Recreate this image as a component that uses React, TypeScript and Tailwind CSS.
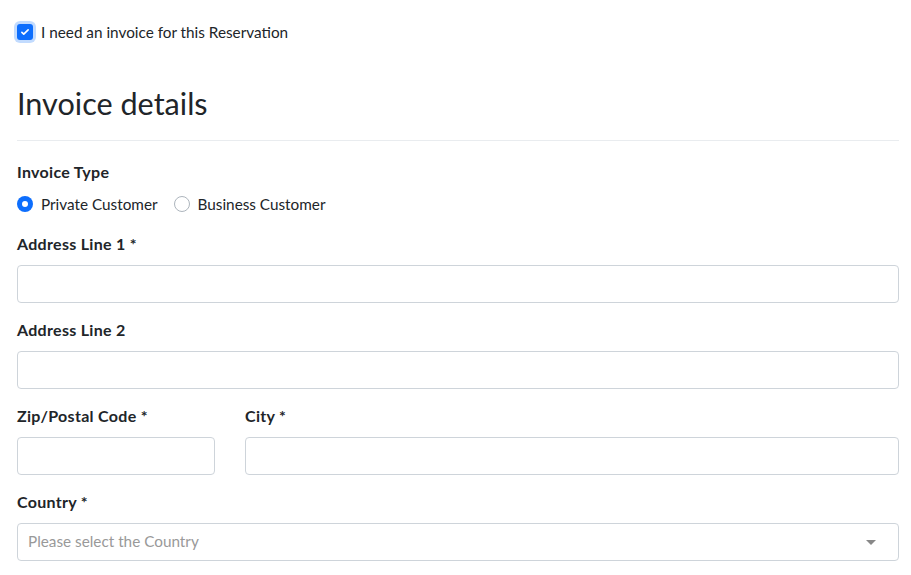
const font = { fontFamily: "Lato, 'Noto Sans', sans-serif" }

const Field = ({ label, className = "" }: { label: string; className?: string }) => (
  <div className={`flex flex-col ${className}`}>
    <label className="text-[16px] leading-6 font-bold tracking-[0.3px] text-[#212529] mb-[9px]">{label}</label>
    <input className="h-[38px] w-full rounded-[4px] border border-[#ced4da] bg-white px-[11px] text-[16px] outline-none" />
  </div>
)

const Radio = ({ label, checked }: { label: string; checked?: boolean }) => (
  <label className="flex items-center gap-2 text-[15.3px] text-[#212529]">
    {checked ? (
      <span className="w-4 h-4 rounded-full bg-[#0d6efd] flex items-center justify-center">
        <span className="w-[6px] h-[6px] rounded-full bg-white" />
      </span>
    ) : (
      <span className="w-4 h-4 rounded-full border border-[#adb5bd] bg-white" />
    )}
    {label}
  </label>
)

export default function App() {
  return (
    <div className="min-h-screen bg-white pl-[17px] pr-[12px] text-[#212529]" style={font}>
      <div className="flex items-center gap-2 h-6 mt-[20px]">
        <span className="w-4 h-4 rounded-[3px] bg-[#0d6efd] flex items-center justify-center shadow-[0_0_0_3px_rgba(13,110,253,0.25)]">
          <svg viewBox="0 0 16 16" className="w-[10px] h-[10px]" fill="none" stroke="white" strokeWidth="2.6" strokeLinecap="round" strokeLinejoin="round">
            <path d="M3 8.5l3 3 7-7" />
          </svg>
        </span>
        <span className="text-[15.3px]">I need an invoice for this Reservation</span>
      </div>

      <h2 className="text-[30.6px] leading-[40px] font-normal mt-[40px] pb-[16px] border-b border-[#e9ecef]">Invoice details</h2>

      <div className="mt-[19px]">
        <div className="text-[16px] leading-6 font-bold tracking-[0.3px]">Invoice Type</div>
        <div className="flex items-center gap-4 h-6 mt-2">
          <Radio label="Private Customer" checked />
          <Radio label="Business Customer" />
        </div>
      </div>

      <div className="flex flex-col gap-[15px] mt-4">
        <Field label="Address Line 1 *" />
        <Field label="Address Line 2" />
        <div className="flex gap-[30px]">
          <Field label="Zip/Postal Code *" className="w-[198px] shrink-0" />
          <Field label="City *" className="flex-1" />
        </div>
        <div className="flex flex-col">
          <label className="text-[16px] leading-6 font-bold tracking-[0.3px] mb-[9px]">Country *</label>
          <div className="h-[38px] rounded-[4px] border border-[#ced4da] flex items-center justify-between pl-[10px] pr-[22px]">
            <span className="text-[#999999] text-[15.3px] -mt-[1px]">Please select the Country</span>
            <svg viewBox="0 0 10 5" className="w-[10px] h-[5px]">
              <path d="M0 0h10L5 5z" fill="#888888" />
            </svg>
          </div>
        </div>
      </div>
    </div>
  )
}
